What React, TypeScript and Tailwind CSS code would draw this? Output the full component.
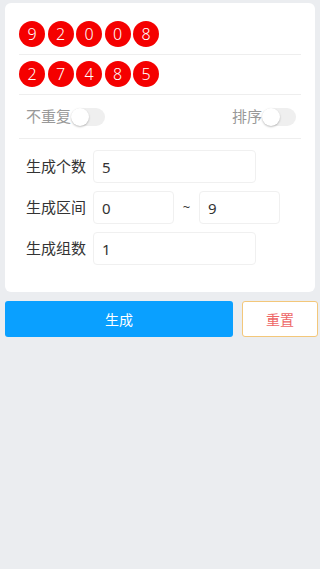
import { useState } from 'react'

const font = { fontFamily: '"Noto Sans", "Noto Sans CJK SC", sans-serif' }

function Ball({ n }: { n: number }) {
  return (
    <div className="flex h-[26px] w-[26px] items-center justify-center rounded-full bg-[#f50000] text-[16px] font-light text-white">
      {n}
    </div>
  )
}

function Toggle({ on, onClick }: { on: boolean; onClick: () => void }) {
  return (
    <button
      onClick={onClick}
      className={`relative h-[18px] w-[34px] rounded-full ${on ? 'bg-[#0aa0ff]' : 'bg-[#efefef]'}`}
    >
      <span
        className={`absolute top-0 h-[18px] w-[18px] rounded-full bg-white shadow-[0_1px_2px_rgba(0,0,0,0.25)] ${on ? 'left-[16px]' : 'left-0'}`}
      />
    </button>
  )
}

export default function App() {
  const [noRepeat, setNoRepeat] = useState(false)
  const [sorted, setSorted] = useState(false)
  const groups = [
    [9, 2, 0, 0, 8],
    [2, 7, 4, 8, 5],
  ]

  return (
    <div className="min-h-[569px] bg-[#ebedf0] pt-[3px]" style={font}>
      <div className="mx-[5px] rounded-[6px] bg-white px-[14px] pb-[27px] pt-[18px]">
        <div className="flex flex-col gap-[6px]">
          {groups.map((g, i) => (
            <div key={i} className="flex gap-[2.5px] border-b border-[#eeeeee] pb-[7px]">
              {g.map((n, j) => (
                <Ball key={j} n={n} />
              ))}
            </div>
          ))}
        </div>
        <div className="flex h-[44px] items-center justify-between border-b border-[#eeeeee] pl-[7px] pr-[5px] text-[15px] text-[#999999]">
          <div className="flex items-center">
            <span>不重复</span>
            <Toggle on={noRepeat} onClick={() => setNoRepeat(!noRepeat)} />
          </div>
          <div className="flex items-center">
            <span>排序</span>
            <Toggle on={sorted} onClick={() => setSorted(!sorted)} />
          </div>
        </div>
        <div className="flex flex-col gap-[8px] pl-[7px] pt-[11px] text-[15px] text-[#333333]">
          <div className="flex items-center">
            <span className="w-[67px]">生成个数</span>
            <input defaultValue="5" className="h-[33px] w-[163px] rounded-[4px] border border-[#f0f0f0] px-[8px] text-[#333333] outline-none" />
          </div>
          <div className="flex items-center">
            <span className="w-[67px]">生成区间</span>
            <input defaultValue="0" className="h-[33px] w-[81px] rounded-[4px] border border-[#f0f0f0] px-[8px] outline-none" />
            <span className="w-[25px] text-center text-[13px]">~</span>
            <input defaultValue="9" className="h-[33px] w-[81px] rounded-[4px] border border-[#f0f0f0] px-[8px] outline-none" />
          </div>
          <div className="flex items-center">
            <span className="w-[67px]">生成组数</span>
            <input defaultValue="1" className="h-[33px] w-[163px] rounded-[4px] border border-[#f0f0f0] px-[8px] outline-none" />
          </div>
        </div>
      </div>
      <div className="mt-[9px] flex gap-[9px] pl-[5px] pr-[2px]">
        <button className="h-[36px] flex-1 rounded-[3px] bg-[#0aa0ff] text-[14px] text-white">生成</button>
        <button className="h-[36px] w-[76px] rounded-[3px] border border-[#f3c77a] bg-white text-[14px] text-[#ee6666]">重置</button>
      </div>
    </div>
  )
}
